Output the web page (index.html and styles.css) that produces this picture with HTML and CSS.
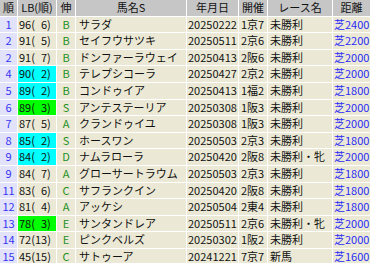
FILE: index.html
```html
<!DOCTYPE html>
<html lang="ja">
<head>
<meta charset="utf-8">
<title>LB順</title>
<link rel="stylesheet" href="styles.css">
</head>
<body>
<div class="grid">
  <div class="row head"><span>順</span><span>LB(順)</span><span>伸</span><span>馬名S</span><span>年月日</span><span>開催</span><span>レース名</span><span>距離</span></div>
  <div class="row"><span class="no">1</span><span class="lb">96( 6)</span><span class="nobi">B</span><span class="name">サラダ</span><span class="date">20250222</span><span class="kai">1京7</span><span class="race">未勝利</span><span class="dist">芝2400</span></div>
  <div class="row"><span class="no">2</span><span class="lb">91( 5)</span><span class="nobi">B</span><span class="name">セイフウサツキ</span><span class="date">20250511</span><span class="kai">2京6</span><span class="race">未勝利</span><span class="dist">芝2200</span></div>
  <div class="row"><span class="no">2</span><span class="lb">91( 7)</span><span class="nobi">B</span><span class="name">ドンファーラウェイ</span><span class="date">20250413</span><span class="kai">2阪6</span><span class="race">未勝利</span><span class="dist">芝2000</span></div>
  <div class="row"><span class="no">4</span><span class="lb cyan">90( 2)</span><span class="nobi">B</span><span class="name">テレプシコーラ</span><span class="date">20250427</span><span class="kai">2京2</span><span class="race">未勝利</span><span class="dist">芝2000</span></div>
  <div class="row"><span class="no">5</span><span class="lb cyan">89( 2)</span><span class="nobi">B</span><span class="name">コンドゥイア</span><span class="date">20250413</span><span class="kai">1福2</span><span class="race">未勝利</span><span class="dist">芝1800</span></div>
  <div class="row"><span class="no">6</span><span class="lb lime">89( 3)</span><span class="nobi">S</span><span class="name">アンテステーリア</span><span class="date">20250308</span><span class="kai">1阪3</span><span class="race">未勝利</span><span class="dist">芝2000</span></div>
  <div class="row"><span class="no">7</span><span class="lb">87( 5)</span><span class="nobi">A</span><span class="name">クランドゥイユ</span><span class="date">20250308</span><span class="kai">1阪3</span><span class="race">未勝利</span><span class="dist">芝2000</span></div>
  <div class="row"><span class="no">8</span><span class="lb cyan">85( 2)</span><span class="nobi">S</span><span class="name">ホースワン</span><span class="date">20250503</span><span class="kai">2京3</span><span class="race">未勝利</span><span class="dist">芝1800</span></div>
  <div class="row"><span class="no">9</span><span class="lb cyan">84( 2)</span><span class="nobi">D</span><span class="name">ナムラローラ</span><span class="date">20250420</span><span class="kai">2阪8</span><span class="race">未勝利・牝</span><span class="dist">芝2000</span></div>
  <div class="row"><span class="no">9</span><span class="lb">84( 7)</span><span class="nobi">A</span><span class="name">グローサートラウム</span><span class="date">20250503</span><span class="kai">2京3</span><span class="race">未勝利</span><span class="dist">芝1800</span></div>
  <div class="row"><span class="no">11</span><span class="lb">83( 6)</span><span class="nobi">C</span><span class="name">サフランクイン</span><span class="date">20250420</span><span class="kai">2阪8</span><span class="race">未勝利</span><span class="dist">芝1800</span></div>
  <div class="row"><span class="no">12</span><span class="lb">81( 4)</span><span class="nobi">A</span><span class="name">アッケシ</span><span class="date">20250504</span><span class="kai">2東4</span><span class="race">未勝利</span><span class="dist">芝1800</span></div>
  <div class="row"><span class="no">13</span><span class="lb lime">78( 3)</span><span class="nobi">E</span><span class="name">サンタンドレア</span><span class="date">20250511</span><span class="kai">2京6</span><span class="race">未勝利・牝</span><span class="dist">芝2000</span></div>
  <div class="row"><span class="no">14</span><span class="lb">72(13)</span><span class="nobi">E</span><span class="name">ピンクベルズ</span><span class="date">20250302</span><span class="kai">1阪2</span><span class="race">未勝利</span><span class="dist">芝2000</span></div>
  <div class="row"><span class="no">15</span><span class="lb">45(15)</span><span class="nobi">C</span><span class="name">サトゥーア</span><span class="date">20241221</span><span class="kai">7京7</span><span class="race">新馬</span><span class="dist">芝1600</span></div>
</div>
</body>
</html>
```
FILE: styles.css
```css
html, body {
  margin: 0;
  padding: 0;
  background: #ffffff;
}

body {
  font-family: "Noto Sans CJK JP", "Noto Sans", sans-serif;
  font-size: 11px;
  color: #111111;
}

.grid {
  display: grid;
  grid-template-columns: 17px 38px 18px 110px 51px 28px 64px 37px;
  grid-auto-rows: 15.6px;
  column-gap: 1px;
  row-gap: 1px;
  width: 370px;
}

.row {
  display: contents;
}

.row > span {
  display: block;
  line-height: 15.6px;
  white-space: nowrap;
  overflow: hidden;
  background: #ebe9d5;
}

.head > span {
  background: #c6c6c6;
  text-align: center;
  color: #111111;
}

.row > .no {
  background: #e2e2fa;
  color: #3535f5;
  text-align: center;
}

.row > .lb {
  padding-left: 1px;
  white-space: pre;
  word-spacing: 3.6px;
}

.row > .lb.cyan {
  background: #00ffff;
}

.row > .lb.lime {
  background: #00ff00;
}

.row > .nobi {
  color: #1f8f1f;
  text-align: center;
}

.row > .name {
  padding-left: 3px;
}

.row > .date {
  padding-left: 1px;
}

.row > .kai {
  padding-left: 2px;
}

.row > .race {
  padding-left: 2px;
}

.row > .dist {
  padding-left: 1px;
  color: #2a2af5;
}
```
